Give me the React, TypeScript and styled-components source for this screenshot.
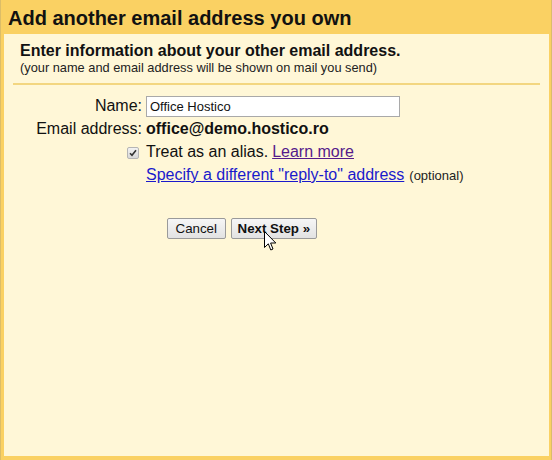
import React from "react";
import styled, { createGlobalStyle } from "styled-components";

const GlobalStyle = createGlobalStyle`
  html, body {
    margin: 0;
    padding: 0;
    background: #fad163;
  }
  body {
    font-family: "Liberation Sans", Arial, sans-serif;
    color: #000;
  }
`;

const Frame = styled.div`
  position: relative;
  width: 552px;
  height: 460px;
  box-sizing: border-box;
  background: #fad163;
  border-left: 1px solid #dcbd68;
  border-right: 1px solid #dcbd68;
  display: flex;
  flex-direction: column;
`;

const Title = styled.h1`
  margin: 0;
  padding: 7px 0 4px 7px;
  font-size: 20px;
  line-height: 23px;
  font-weight: bold;
  color: #111;
`;

const Panel = styled.div`
  flex: 1;
  margin: 0 2px 4px 3px;
  background: #fff7d7;
  padding: 8px 8px 0 8px;
`;

const Intro = styled.div`
  padding: 0 0 0 8px;
`;

const Heading = styled.div`
  font-size: 16px;
  line-height: 18px;
  font-weight: bold;
  color: #111;
`;

const Sub = styled.div`
  font-size: 12.8px;
  line-height: 15px;
  color: #222;
`;

const Separator = styled.hr`
  margin: 8px 0 9px 1px;
  border: 0;
  height: 2px;
  background: #f3d680;
  width: 527px;
`;

const Form = styled.div`
  display: grid;
  grid-template-columns: 130px 1fr;
  grid-auto-rows: 23px;
  column-gap: 4px;
  font-size: 16px;
  line-height: 23px;
  color: #111;
`;

const Label = styled.div`
  text-align: right;
`;

const Cell = styled.div`
  display: flex;
  align-items: center;
  gap: 4px;
  white-space: nowrap;
`;

const CheckCell = styled.div`
  display: flex;
  align-items: center;
  justify-content: flex-end;
  padding-right: 3px;
`;

const TextInput = styled.input`
  box-sizing: border-box;
  width: 254px;
  height: 21px;
  margin: 1px 0 0 0;
  padding: 1px 3px;
  border: 1px solid #a9a9a9;
  background: #fff;
  font-family: "Liberation Sans", Arial, sans-serif;
  font-size: 13px;
  color: #111;
  outline: none;
`;

const Value = styled.span`
  font-weight: bold;
`;

const Link = styled.a<{ $visited?: boolean }>`
  color: ${({ $visited }) => ($visited ? "#551a8b" : "#1a1acc")};
  text-decoration: underline;
  cursor: pointer;
`;

const Optional = styled.span`
  font-size: 13px;
  color: #222;
  margin-left: 1px;
  padding-top: 2px;
`;

const Box = styled.span`
  display: inline-flex;
  align-items: center;
  justify-content: center;
  width: 10px;
  height: 10px;
  border: 1px solid #b5b5b5;
  border-radius: 2px;
  background: linear-gradient(#f2f2f2, #d8d8d8);
  margin-top: 2px;
`;

const Buttons = styled.div`
  display: flex;
  gap: 5px;
  padding: 32px 0 0 155px;
`;

const Button = styled.button<{ $primary?: boolean }>`
  height: 21px;
  padding: 0 ${({ $primary }) => ($primary ? "6px" : "7.5px")};
  border: 1px solid #9a9a9a;
  border-radius: 2px;
  background: linear-gradient(#f6f6f6, #e2e2e2);
  font-family: "Liberation Sans", Arial, sans-serif;
  font-size: 13.33px;
  font-weight: ${({ $primary }) => ($primary ? "bold" : "normal")};
  color: #111;
  cursor: pointer;
`;

const Pointer = styled.svg`
  position: absolute;
  left: 263px;
  top: 231px;
  pointer-events: none;
`;

export default function App() {
  return (
    <Frame>
      <GlobalStyle />
      <Title>Add another email address you own</Title>
      <Panel>
        <Intro>
          <Heading>Enter information about your other email address.</Heading>
          <Sub>(your name and email address will be shown on mail you send)</Sub>
        </Intro>
        <Separator />
        <Form>
          <Label>Name:</Label>
          <Cell>
            <TextInput defaultValue="Office Hostico" />
          </Cell>
          <Label>Email address:</Label>
          <Cell>
            <Value>office@demo.hostico.ro</Value>
          </Cell>
          <CheckCell>
            <Box>
              <svg width="8" height="8" viewBox="0 0 8 8">
                <path
                  d="M1 4.2 L3 6.3 L7 1.3"
                  fill="none"
                  stroke="#333"
                  strokeWidth="1.6"
                />
              </svg>
            </Box>
          </CheckCell>
          <Cell>
            Treat as an alias. <Link $visited>Learn more</Link>
          </Cell>
          <div />
          <Cell>
            <Link>Specify a different "reply-to" address</Link>
            <Optional>(optional)</Optional>
          </Cell>
        </Form>
        <Buttons>
          <Button>Cancel</Button>
          <Button $primary>Next Step »</Button>
        </Buttons>
      </Panel>
      <Pointer width="13" height="21" viewBox="0 0 13 21">
        <path
          d="M0.5 0.5 L0.5 16.5 L4.3 12.8 L6.8 19 L9 18 L6.6 12 L11.8 12 Z"
          fill="#fff"
          stroke="#000"
          strokeWidth="1"
          strokeLinejoin="round"
        />
      </Pointer>
    </Frame>
  );
}
